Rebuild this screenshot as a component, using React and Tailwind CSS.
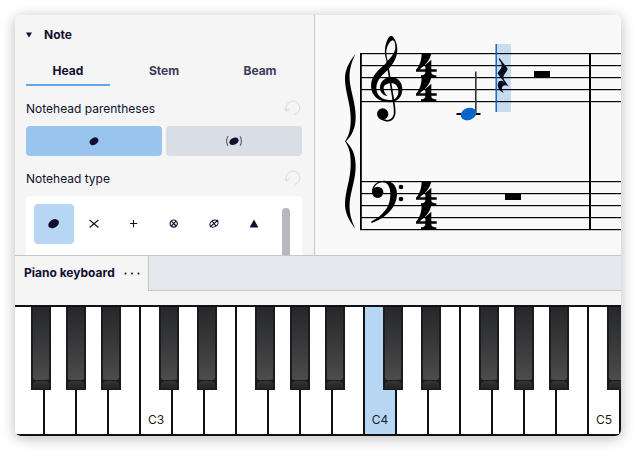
import { useState } from 'react';

const TABS = ['Head', 'Stem', 'Beam'];

const NOTEHEADS = ['normal', 'cross', 'plus', 'circled', 'slashed', 'triangle'];

const WHITE_KEYS = [
  'F2', 'G2', 'A2', 'B2',
  'C3', 'D3', 'E3', 'F3', 'G3', 'A3', 'B3',
  'C4', 'D4', 'E4', 'F4', 'G4', 'A4', 'B4',
  'C5',
];

const SHARP_OFFSET = {
  C: 'left-[18px]',
  D: 'left-[24px]',
  F: 'left-[18px]',
  G: 'left-[21px]',
  A: 'left-[24px]',
};

function NoteheadIcon({ type }) {
  return (
    <svg width="20" height="20" viewBox="0 0 20 20" fill="none" stroke="#10102e" aria-hidden="true">
      {type === 'small' && (
        <ellipse cx="10" cy="10.3" rx="4.7" ry="3.4" transform="rotate(-32 10 10.3)" fill="#10102e" stroke="none" />
      )}
      {type === 'parenthesized' && (
        <>
          <ellipse cx="10" cy="10.3" rx="4.9" ry="3.4" transform="rotate(-26 10 10.3)" fill="#10102e" stroke="none" />
          <path
            d="M4 5.200C2.200 7.500 2.200 12.700 4 15M16 5.200C17.800 7.500 17.800 12.700 16 15"
            stroke="#34343f"
            strokeWidth="0.9"
          />
        </>
      )}
      {type === 'normal' && (
        <ellipse cx="9.600" cy="9.700" rx="5.800" ry="4" transform="rotate(-32 9.600 9.700)" fill="#10102e" stroke="none" />
      )}
      {type === 'cross' && <path d="M5.600 6L14.400 13.500M14.400 6L5.600 13.500" strokeWidth="1.1" />}
      {type === 'plus' && <path d="M6 9.500H13.200M9.500 6V13.200" strokeWidth="1.1" />}
      {type === 'circled' && (
        <>
          <circle cx="9.700" cy="9.600" r="3.600" strokeWidth="1.2" />
          <path d="M7.300 7.200L12.100 12M12.100 7.200L7.300 12" strokeWidth="1.1" />
        </>
      )}
      {type === 'slashed' && (
        <>
          <ellipse cx="10" cy="9.600" rx="4.300" ry="3.200" transform="rotate(-30 10 9.600)" strokeWidth="1.1" />
          <path d="M5.800 13.200L14.200 6M8 7L12 12.200" strokeWidth="1.1" />
        </>
      )}
      {type === 'triangle' && <path d="M10 5.600L14.400 13.500H5.600Z" fill="#10102e" stroke="none" />}
    </svg>
  );
}

function ResetButton({ label }) {
  return (
    <button type="button" aria-label={label} className="h-5 w-5">
      <svg width="20" height="20" viewBox="0 0 20 20" fill="none" stroke="#dcdee4" strokeWidth="1.1">
        <path d="M4.600 11.300A6.800 6.800 0 1 1 12.800 15.400" />
        <path d="M2.200 9.400L4.600 12.100L6.900 9.900" />
      </svg>
    </button>
  );
}

function Properties() {
  const [tab, setTab] = useState('Head');
  const [parens, setParens] = useState(false);
  const [head, setHead] = useState('normal');

  return (
    <section className="w-[300px] shrink-0 border-r border-[#c4c7cd] bg-[#f5f5f6] pt-2.5 pr-3 pl-[11px]">
      <button type="button" aria-expanded="true" className="flex h-5 items-center text-xs font-bold">
        <svg width="6" height="6" viewBox="0 0 6 6" className="mr-3" aria-hidden="true">
          <path d="M0 0.500H6L3 5.500Z" fill="#10102e" />
        </svg>
        Note
      </button>

      <div role="tablist" className="mt-4 grid grid-cols-3 gap-3">
        {TABS.map((name) => (
          <button
            key={name}
            type="button"
            role="tab"
            aria-selected={tab === name}
            onClick={() => setTab(name)}
            className={
              tab === name
                ? 'h-[25px] border-b-2 border-[#62a9ea] pb-1 text-xs font-bold'
                : 'h-[25px] border-b-2 border-transparent pb-1 text-xs font-bold text-[#3c3c58]'
            }
          >
            {name}
          </button>
        ))}
      </div>

      <div className="mt-[13px] flex h-5 items-center justify-between">
        <h3 className="text-xs">Notehead parentheses</h3>
        <ResetButton label="Reset notehead parentheses" />
      </div>
      <div className="mt-[7px] grid grid-cols-2 gap-1">
        <button
          type="button"
          aria-label="Without parentheses"
          aria-pressed={!parens}
          onClick={() => setParens(false)}
          className={`flex h-[30px] items-center justify-center rounded-sm ${parens ? 'bg-[#d9dee5]' : 'bg-[#99c4ee]'}`}
        >
          <NoteheadIcon type="small" />
        </button>
        <button
          type="button"
          aria-label="With parentheses"
          aria-pressed={parens}
          onClick={() => setParens(true)}
          className={`flex h-[30px] items-center justify-center rounded-sm ${parens ? 'bg-[#99c4ee]' : 'bg-[#d9dee5]'}`}
        >
          <NoteheadIcon type="parenthesized" />
        </button>
      </div>

      <div className="mt-[13px] flex h-5 items-center justify-between">
        <h3 className="text-xs">Notehead type</h3>
        <ResetButton label="Reset notehead type" />
      </div>
      <div className="mt-[7px] flex justify-between rounded-t bg-white pt-2 pr-3 pl-2">
        <div className="grid grid-cols-6">
          {NOTEHEADS.map((type) => (
            <button
              key={type}
              type="button"
              aria-label={type}
              aria-pressed={head === type}
              onClick={() => setHead(type)}
              className={`flex h-10 w-10 items-center justify-center rounded-sm ${head === type ? 'bg-[#b6d6f4]' : ''}`}
            >
              <NoteheadIcon type={type} />
            </button>
          ))}
        </div>
        <div className="mt-1 h-12 w-2 rounded-t-full bg-[#b7b7c1]" />
      </div>
    </section>
  );
}

function Four() {
  return (
    <path d="M275 100H304C300 120 288 134 269 148H286V135L304 119V148H320V155H304C304 163 308 165 319 166V173H273V166C283 165 286 162 286 155H258V149C269 139 275 118 275 100Z" />
  );
}

function Score() {
  const staves = [38, 166];

  return (
    <section aria-label="Score" className="h-60 min-w-0 flex-1 overflow-hidden bg-[#f9f9f9]">
      <svg width="100%" height="240">
        <rect x="181" y="29" width="15" height="68" fill="#c7dcef" />

        {staves.map((top) =>
          [0, 1, 2, 3, 4].map((n) => (
            <rect key={`${top}-${n}`} x="45" y={top + n * 12} width="100%" height="1.200" />
          ))
        )}
        <rect x="45" y="38" width="1.800" height="177" />
        <rect x="274" y="38" width="2" height="177" />

        {/* glyphs are drawn at three units per pixel */}
        <g transform="translate(15 5) scale(0.33333)">
          <path d="M76 102C56 128 44 150 45 180C46 215 61 250 62 290C63 325 58 345 45 364C58 383 63 403 62 438C61 478 46 513 45 548C44 578 56 600 76 626C64 600 57 578 59 548C62 513 77 478 77 438C77 403 66 383 48 364C66 345 77 325 77 290C77 250 62 215 59 180C57 150 64 128 76 102Z" />

          <path
            fillRule="evenodd"
            d="M171 127C166 112 163 100 165 86C167 66 176 47 184 47C192 48 202 70 202 88C202 112 190 132 176 147C158 165 140 178 139 204C139 226 156 240 180 240C197 240 206 228 205 212C204 198 196 190 184 190C172 190 161 195 161 204C161 214 165 222 173 228C160 226 150 217 150 203C150 186 164 171 184 171C204 171 217 188 217 208C217 232 200 247 180 247C148 247 123 228 123 198C123 165 150 147 171 127ZM173 122C184 112 196 96 196 82C196 70 193 61 188 61C180 62 169 80 169 96C169 106 171 115 173 122Z"
          />
          <path
            d="M171 124L190 240C194 264 196 274 193 285C189 298 180 303 169 302C162 301 155 299 150 294"
            fill="none"
            stroke="#000"
            strokeWidth="5"
          />
          <circle cx="158" cy="282" r="17" />

          <Four />
          <g transform="translate(0 72)">
            <Four />
          </g>

          <g transform="translate(0 300)">
            <path d="M126 216C125 196 142 182 162 182C186 182 201 196 201 221C201 260 170 292 125 309L123 305C158 286 181 262 181 224C181 202 174 187 158 187C146 187 136 194 133 204Z" />
            <circle cx="143" cy="217" r="17" />
            <circle cx="213" cy="201" r="7" />
            <circle cx="213" cy="237" r="7" />
          </g>
          <g transform="translate(0 384)">
            <Four />
          </g>
          <g transform="translate(0 456)">
            <Four />
          </g>
        </g>

        <g>
          <rect x="141.500" y="98" width="24" height="2" />
          <rect x="160" y="56.500" width="1.600" height="42" fill="#333" />
          <ellipse cx="153.500" cy="99" rx="8" ry="6" transform="rotate(-20 153.500 99)" fill="#0a66c8" />
        </g>

        <rect x="180.500" y="29" width="1.400" height="68" fill="#0a5fc4" />
        <path
          transform="translate(125 15) scale(0.33333)"
          fill="#020c1c"
          d="M178 84L201 113C204 117 203 120 199 125C193 132 189 139 190 144C193 152 200 160 207 170C197 162 184 166 186 178C187 184 190 188 192 189C182 186 174 176 173 165C173 153 182 149 192 155L174 133C172 130 173 127 177 123C188 112 188 104 176 88Z"
        />
        <rect x="219" y="56" width="16" height="7" />
        <rect x="190" y="178" width="16" height="7" />
      </svg>
    </section>
  );
}

function PianoKey({ name, active }) {
  const sharp = SHARP_OFFSET[name[0]];

  return (
    <div className="relative h-full w-8 shrink-0">
      <button
        type="button"
        aria-label={name}
        className={`flex h-full w-full items-end justify-center border-r-2 border-[#111113] pb-1.5 text-xs text-[#1c1c20] ${
          active ? 'bg-[#b6d6f4]' : 'bg-white'
        }`}
      >
        {name[0] === 'C' && name}
      </button>
      {sharp && (
        <button
          type="button"
          aria-label={`${name[0]} sharp ${name[1]}`}
          className={`absolute top-0 z-10 flex h-[83px] w-5 flex-col border-x-2 border-b border-[#1b1b1d] bg-[#1b1b1d] ${sharp}`}
        >
          <span className="w-full flex-1 rounded-b-xs bg-linear-to-b from-[#26272a] to-[#4c4c4c]" />
          <span className="mt-px h-2 w-full rounded-t-sm bg-linear-to-b from-[#343437] to-[#232326]" />
        </button>
      )}
    </div>
  );
}

function PianoPanel() {
  return (
    <section className="border-t border-[#c4c7cd] bg-[#f5f5f6]">
      <div className="flex h-[35px]">
        <div className="flex items-center gap-2 border-r border-[#c4c7cd] pr-2 pb-0.5 pl-[9px]">
          <h2 className="text-xs font-bold">Piano keyboard</h2>
          <button type="button" aria-label="Panel options" className="h-4 w-[17px]">
            <svg width="17" height="16" viewBox="0 0 17 16" fill="#10102e">
              <circle cx="2.500" cy="8.500" r="1" />
              <circle cx="9" cy="8.500" r="1" />
              <circle cx="15.500" cy="8.500" r="1" />
            </svg>
          </button>
        </div>
        <div className="flex-1 border-b border-[#c4c7cd] bg-[#e5e9ee]" />
      </div>
      <div className="mt-3.5 h-[131px] overflow-hidden border-y-2 border-[#111113] bg-white">
        <div className="-ml-0.5 flex h-full">
          {WHITE_KEYS.map((name) => (
            <PianoKey key={name} name={name} active={name === 'C4'} />
          ))}
        </div>
      </div>
    </section>
  );
}

export default function App() {
  return (
    <div className="bg-white p-[15px] font-['Inter',sans-serif] text-[#10102e]">
      <main className="overflow-hidden rounded-md shadow-[0_2px_14px_rgba(0,0,0,0.28)]">
        <div className="flex h-60 overflow-hidden">
          <Properties />
          <Score />
        </div>
        <PianoPanel />
      </main>
    </div>
  );
}
